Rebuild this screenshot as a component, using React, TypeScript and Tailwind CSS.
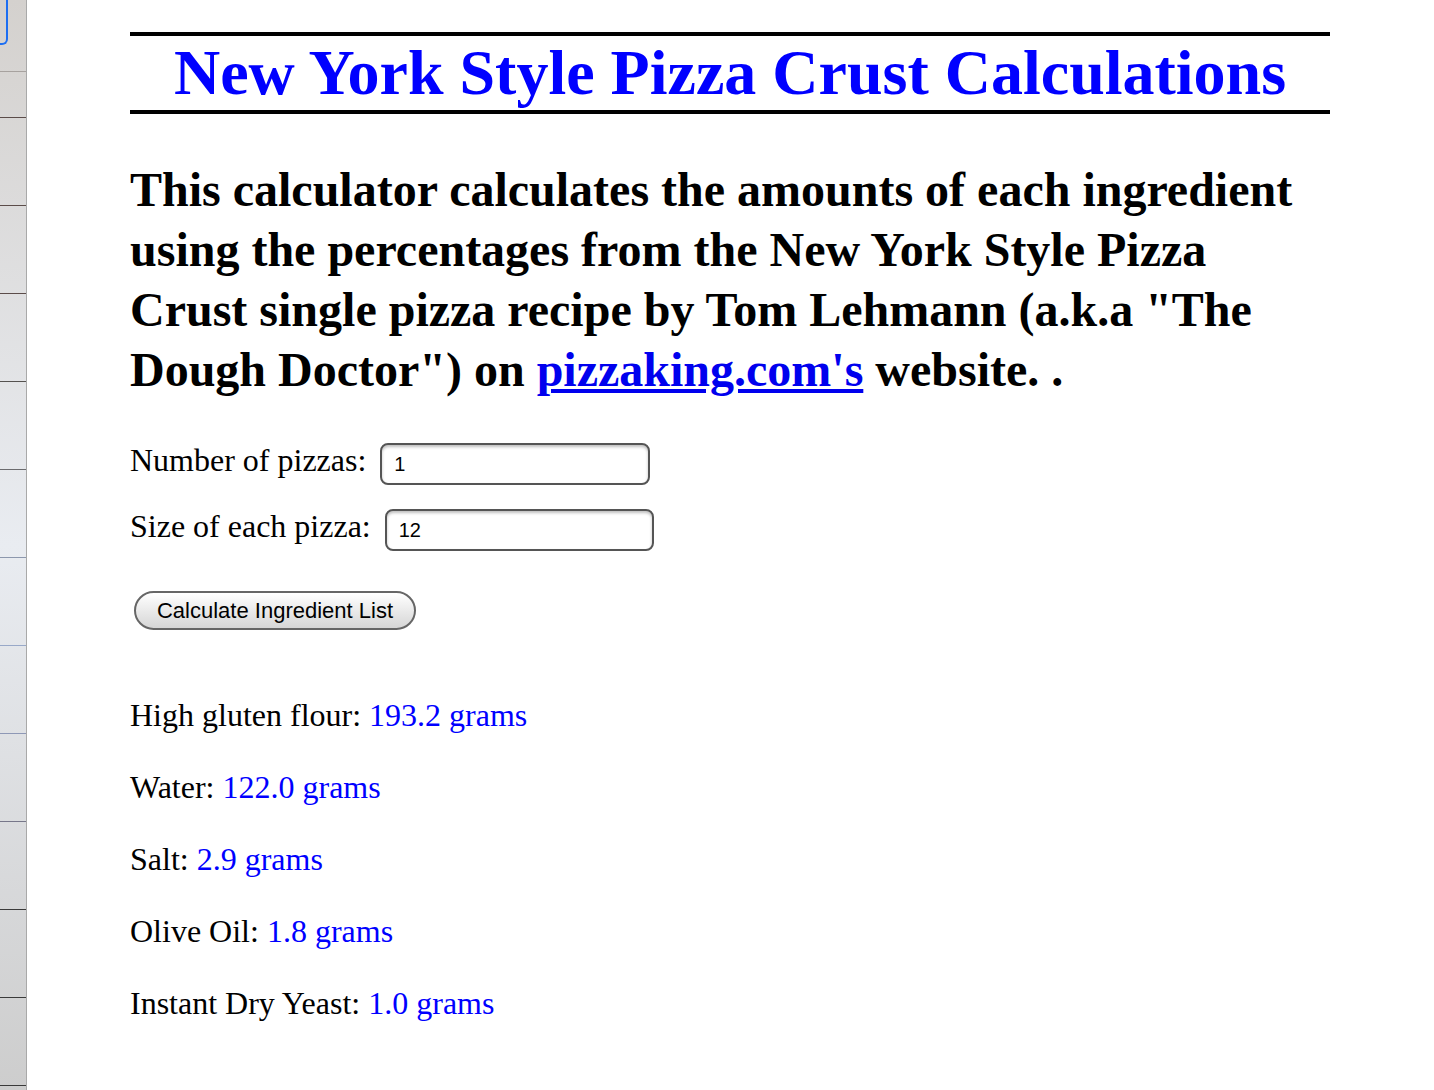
import { useState } from 'react';

const sideLines = [
    { h: 'h-[72px]', line: 'border-[#a7a29f]' },
    { h: 'h-[46px]', line: 'border-[#5b4c49]' },
    { h: 'h-[88px]', line: 'border-[#5b4c49]' },
    { h: 'h-[88px]', line: 'border-[#5b4c49]' },
    { h: 'h-[88px]', line: 'border-[#555250]' },
    { h: 'h-[88px]', line: 'border-[#6b6b6e]' },
    { h: 'h-[88px]', line: 'border-[#8c97ad]' },
    { h: 'h-[88px]', line: 'border-[#98a8c8]' },
    { h: 'h-[88px]', line: 'border-[#8e98b6]' },
    { h: 'h-[88px]', line: 'border-[#77778a]' },
    { h: 'h-[88px]', line: 'border-[#3a3a3a]' },
    { h: 'h-[88px]', line: 'border-[#3a3a3a]' },
    { h: 'h-[88px]', line: 'border-[#3a3a3a]' },
];

const results = [
    { label: 'High gluten flour:', value: '193.2 grams' },
    { label: 'Water:', value: '122.0 grams' },
    { label: 'Salt:', value: '2.9 grams' },
    { label: 'Olive Oil:', value: '1.8 grams' },
    { label: 'Instant Dry Yeast:', value: '1.0 grams' },
];

export default function App() {
    const [count, setCount] = useState('1');
    const [size, setSize] = useState('12');

    return (
        <div className="flex min-h-[1090px] w-[1434px] bg-white font-['Liberation_Serif','Times_New_Roman',serif] text-black">

            {/* left strip */}
            <div className="w-[27px] shrink-0 h-[1090px] overflow-hidden border-r border-[#a9a9a9] bg-linear-to-b from-[#d4d1ce] via-[#e9ecf1] to-[#cdcdcd]">
                {sideLines.map((s, i) => (
                    <div key={i} className={`${s.h} border-b ${s.line}`}>
                        {i === 0 && (
                            <div className="w-[8px] h-[45px] border-r-2 border-b-2 border-[#1c6ef2] rounded-br-[6px]" />
                        )}
                    </div>
                ))}
            </div>

            {/* content */}
            <div className="pl-[103px] pt-[32px] w-[1303px]">
                <h1 className="w-[1200px] border-y-4 border-black text-center text-[64px] font-bold leading-[74px] text-[#0000ff]">
                    New York Style Pizza Crust Calculations
                </h1>

                <p className="w-[1200px] mt-[46px] text-[48px] font-bold leading-[60px]">
                    This calculator calculates the amounts of each ingredient using the percentages from the New York Style Pizza Crust single pizza recipe by Tom Lehmann (a.k.a "The Dough Doctor") on{' '}
                    <a href="#" className="text-[#0000ee] underline">pizzaking.com's</a> website. .
                </p>

                <div className="mt-[43px] h-[42px] flex items-center gap-[14px] text-[32px]">
                    <span className="leading-[34px] mb-[8px]">Number of pizzas:</span>
                    <input
                        value={count}
                        onChange={e => setCount(e.target.value)}
                        className="w-[270px] h-[42px] rounded-[8px] border-2 border-[#555] px-[12px] text-[20px] font-['Liberation_Sans',Arial,sans-serif] shadow-[inset_0_2px_3px_rgba(0,0,0,0.25)] outline-none"
                    />
                </div>

                <div className="mt-[24px] h-[42px] flex items-center gap-[14px] text-[32px]">
                    <span className="leading-[34px] mb-[8px]">Size of each pizza:</span>
                    <input
                        value={size}
                        onChange={e => setSize(e.target.value)}
                        className="w-[269px] h-[42px] rounded-[8px] border-2 border-[#555] px-[12px] text-[20px] font-['Liberation_Sans',Arial,sans-serif] shadow-[inset_0_2px_3px_rgba(0,0,0,0.25)] outline-none"
                    />
                </div>

                <button className="mt-[40px] ml-[4px] h-[39px] w-[282px] rounded-full border-2 border-[#666] bg-linear-to-b from-white to-[#d6d6d6] text-[22px] font-['Liberation_Sans',Arial,sans-serif]">
                    Calculate Ingredient List
                </button>

                <div className="mt-[67px] flex flex-col gap-[36px] text-[32px] leading-[36px]">
                    {results.map(r => (
                        <div key={r.label}>
                            {r.label} <span className="text-[#0000ff]">{r.value}</span>
                        </div>
                    ))}
                </div>
            </div>
        </div>
    );
}
